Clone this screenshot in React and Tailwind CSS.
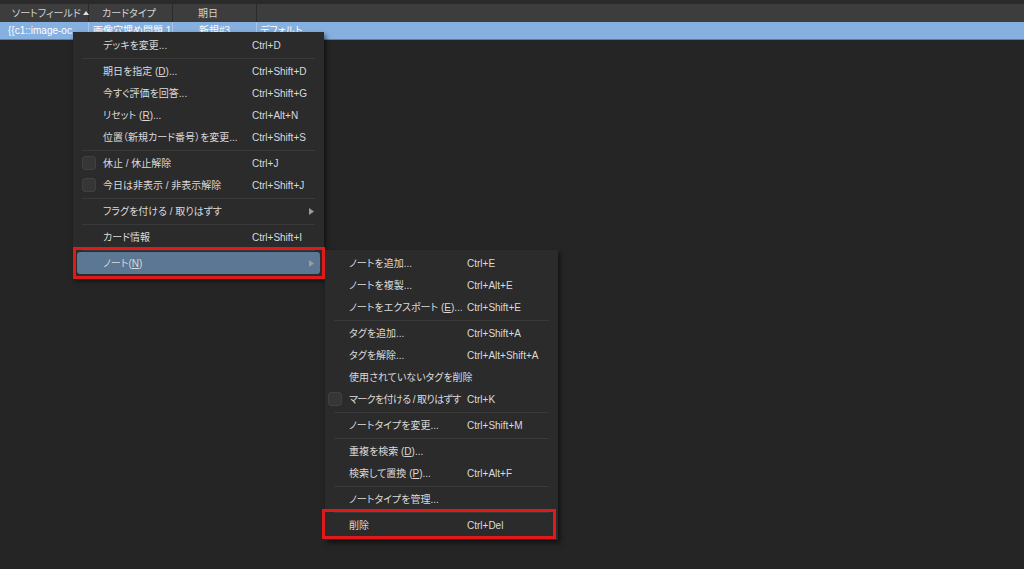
import React from "react";

// card browser: table header + right-click menu with the note submenu open
const cardMenu = [
  { label: "デッキを変更...", key: "Ctrl+D" },
  { sep: true },
  { label: "期日を指定 (", u: "D", after: ")...", key: "Ctrl+Shift+D" },
  { label: "今すぐ評価を回答...", key: "Ctrl+Shift+G" },
  { label: "リセット (", u: "R", after: ")...", key: "Ctrl+Alt+N" },
  { label: "位置（新規カード番号）を変更...", key: "Ctrl+Shift+S" },
  { sep: true },
  { label: "休止 / 休止解除", key: "Ctrl+J", check: true },
  { label: "今日は非表示 / 非表示解除", key: "Ctrl+Shift+J", check: true },
  { sep: true },
  { label: "フラグを付ける / 取りはずす", arrow: true },
  { sep: true },
  { label: "カード情報", key: "Ctrl+Shift+I" },
  { sep: true },
  { label: "ノート(", u: "N", after: ")", arrow: true, active: true },
];

const noteMenu = [
  { label: "ノートを追加...", key: "Ctrl+E" },
  { label: "ノートを複製...", key: "Ctrl+Alt+E" },
  { label: "ノートをエクスポート (", u: "E", after: ")...", key: "Ctrl+Shift+E" },
  { sep: true },
  { label: "タグを追加...", key: "Ctrl+Shift+A" },
  { label: "タグを解除...", key: "Ctrl+Alt+Shift+A" },
  { label: "使用されていないタグを削除" },
  { label: "マークを付ける / 取りはずす", key: "Ctrl+K", check: true, tight: true },
  { sep: true },
  { label: "ノートタイプを変更...", key: "Ctrl+Shift+M" },
  { sep: true },
  { label: "重複を検索 (", u: "D", after: ")..." },
  { label: "検索して置換 (", u: "P", after: ")...", key: "Ctrl+Alt+F" },
  { sep: true },
  { label: "ノートタイプを管理..." },
  { sep: true },
  { label: "削除", key: "Ctrl+Del" },
];

const Arrow = () => (
  <svg width="5" height="7" viewBox="0 0 5 7" className="absolute right-[6px] top-[8px]">
    <path d="M0 0 L5 3.5 L0 7 Z" fill="#9c9c9c" />
  </svg>
);

const Menu = ({ items, pos, labelClass, checkLeft }) => (
  <div className={"absolute bg-[#2b2b2b] py-[2px] shadow-[2px_3px_5px_rgba(0,0,0,0.55)] " + pos}>
    {items.map((it, i) =>
      it.sep ? (
        <div key={i} className="h-[4px] flex items-center px-[9px]">
          <div className="h-px w-full bg-[#3a3a3a]" />
        </div>
      ) : (
        <div
          key={i}
          className={
            "relative h-[22px] mx-[4px] flex items-center rounded-[3px] whitespace-nowrap " +
            (it.active ? "bg-[#5b7793]" : "")
          }
        >
          {it.check && (
            <span
              className={
                "absolute top-[4px] w-[14px] h-[14px] rounded-[3px] bg-[#363636] border border-[#404040] " +
                checkLeft
              }
            />
          )}
          <span className={"shrink-0 overflow-visible " + labelClass + (it.tight ? " tracking-[-0.6px]" : "")}>
            {it.label}
            {it.u && <span className="underline">{it.u}</span>}
            {it.after}
          </span>
          <span>{it.key}</span>
          {it.arrow && <Arrow />}
        </div>
      )
    )}
  </div>
);

export default function App() {
  return (
    <div className="relative w-[1024px] h-[569px] overflow-hidden bg-[#252525] text-[10px] text-[#dadada] [font-family:'Liberation_Sans','Noto_Sans_CJK_JP',sans-serif] [font-feature-settings:'palt']">
      <div className="h-[4px] bg-[#2a2a2a]" />
      {/* header */}
      <div className="flex h-[18px] bg-[#3d3d3d] text-[#d2d2d2] whitespace-nowrap">
        <div className="w-[89px] flex items-center pl-[12px] border-r border-[#2a2a2a]">
          <span>ソートフィールド</span>
          <svg width="6" height="4" viewBox="0 0 6 4" className="ml-[2px] shrink-0">
            <path d="M0 4 L3 0 L6 4 Z" fill="#e0e0e0" />
          </svg>
        </div>
        <div className="w-[84px] flex items-center pl-[13px] border-r border-[#2a2a2a]">カードタイプ</div>
        <div className="w-[84px] flex items-center pl-[25px] border-r border-[#2a2a2a]">期日</div>
        <div className="flex-1" />
      </div>
      {/* selected row */}
      <div className="flex h-[18px] bg-[#86b0df] border-b border-[#5b7ea6] text-white whitespace-nowrap">
        <div className="w-[89px] flex items-center pl-[8px] border-r border-[#a9c6ea] overflow-hidden">
          {"{{c1::image-oc"}
        </div>
        <div className="w-[84px] flex items-center pl-[4px] border-r border-[#a9c6ea] overflow-hidden">
          画像穴埋め問題 1
        </div>
        <div className="w-[84px] flex items-center pl-[26px] border-r border-[#a9c6ea]">新規#3</div>
        <div className="flex-1 flex items-center pl-[3px]">デフォルト</div>
      </div>

      <Menu items={cardMenu} pos="left-[73px] top-[32px] w-[251px] pb-[4px]" labelClass="ml-[26px] w-[149px]" checkLeft="left-[5px]" />
      <Menu items={noteMenu} pos="left-[325px] top-[250px] w-[233px] pb-[4px]" labelClass="ml-[20px] w-[118px]" checkLeft="left-[-1px]" />

      {/* red annotation frames */}
      <div className="absolute left-[73px] top-[247px] w-[252px] h-[32px] border-[3px] border-[#e0191b]" />
      <div className="absolute left-[322px] top-[509px] w-[234px] h-[30px] border-[3px] border-[#e0191b]" />
    </div>
  );
}
